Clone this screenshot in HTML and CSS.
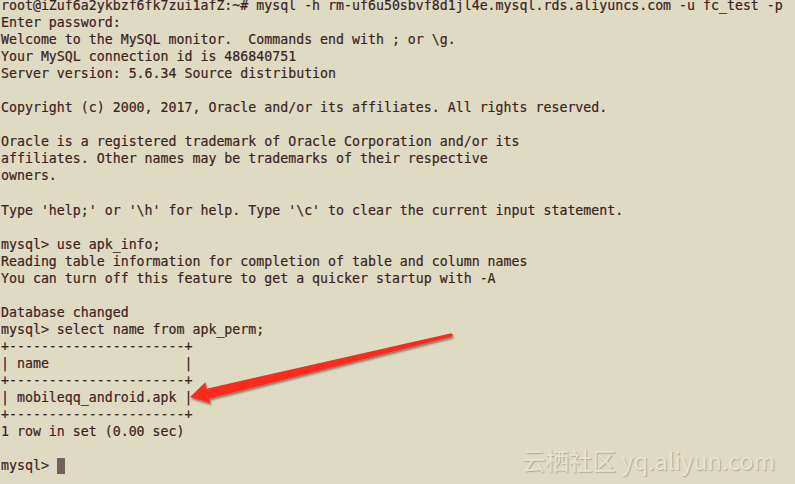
FILE: index.html
```html
<!DOCTYPE html>
<html lang="en">
<head>
<meta charset="utf-8">
<title>Terminal</title>
<link rel="stylesheet" href="styles.css">
</head>
<body>
<main class="term">
<pre class="screen">root@iZuf6a2ykbzf6fk7zui1afZ:~# mysql -h rm-uf6u50sbvf8d1jl4e.mysql.rds.aliyuncs.com -u fc_test -p
Enter password:
Welcome to the MySQL monitor.  Commands end with ; or \g.
Your MySQL connection id is 486840751
Server version: 5.6.34 Source distribution

Copyright (c) 2000, 2017, Oracle and/or its affiliates. All rights reserved.

Oracle is a registered trademark of Oracle Corporation and/or its
affiliates. Other names may be trademarks of their respective
owners.

Type 'help;' or '\h' for help. Type '\c' to clear the current input statement.

mysql&gt; use apk_info;
Reading table information for completion of table and column names
You can turn off this feature to get a quicker startup with -A

Database changed
mysql&gt; select name from apk_perm;
+----------------------+
| name                 |
+----------------------+
| mobileqq_android.apk |
+----------------------+
1 row in set (0.00 sec)

mysql&gt; <span class="cursor"></span></pre>
<svg class="arrow" width="795" height="484" viewBox="0 0 795 484" aria-hidden="true">
  <defs>
    <filter id="shadow" x="-10%" y="-50%" width="120%" height="200%">
      <feDropShadow dx="1" dy="2" stdDeviation="1.2" flood-color="#000" flood-opacity="0.45"/>
    </filter>
  </defs>
  <polygon filter="url(#shadow)" fill="#fc2a1e"
    points="451.3,333.3 452.8,334.6 452.2,336.6 209.2,398.6 210.5,403.2 190,397 205.4,382.3 206.6,388.7" />
</svg>
<div class="watermark">云栖社区 yq.aliyun.com</div>
</main>
</body>
</html>
```
FILE: styles.css
```css
html, body {
  margin: 0;
  padding: 0;
  background: #dfdbc3;
}

.term {
  position: relative;
  width: 795px;
  height: 484px;
  overflow: hidden;
  background: #dfdbc3;
}

.screen {
  margin: -3px 0 0 0;
  padding: 0 0 0 1px;
  font-family: "DejaVu Sans Mono", "Liberation Mono", monospace;
  font-size: 13.25px;
  line-height: 17.05px;
  color: #3b2322;
  -webkit-text-stroke: 0.2px #3b2322;
  white-space: pre;
}

.cursor {
  display: inline-block;
  width: 8px;
  height: 16px;
  background: #73635a;
  vertical-align: -4px;
}

.arrow {
  position: absolute;
  left: 0;
  top: 0;
}

.watermark {
  position: absolute;
  left: 522px;
  top: 445px;
  font-family: "Noto Sans CJK SC", "Noto Sans", sans-serif;
  font-size: 23.5px;
  line-height: 30px;
  color: #e8e4d3;
  text-shadow: 1px 1px 1px rgba(90, 80, 60, 0.35);
  white-space: nowrap;
}
```
